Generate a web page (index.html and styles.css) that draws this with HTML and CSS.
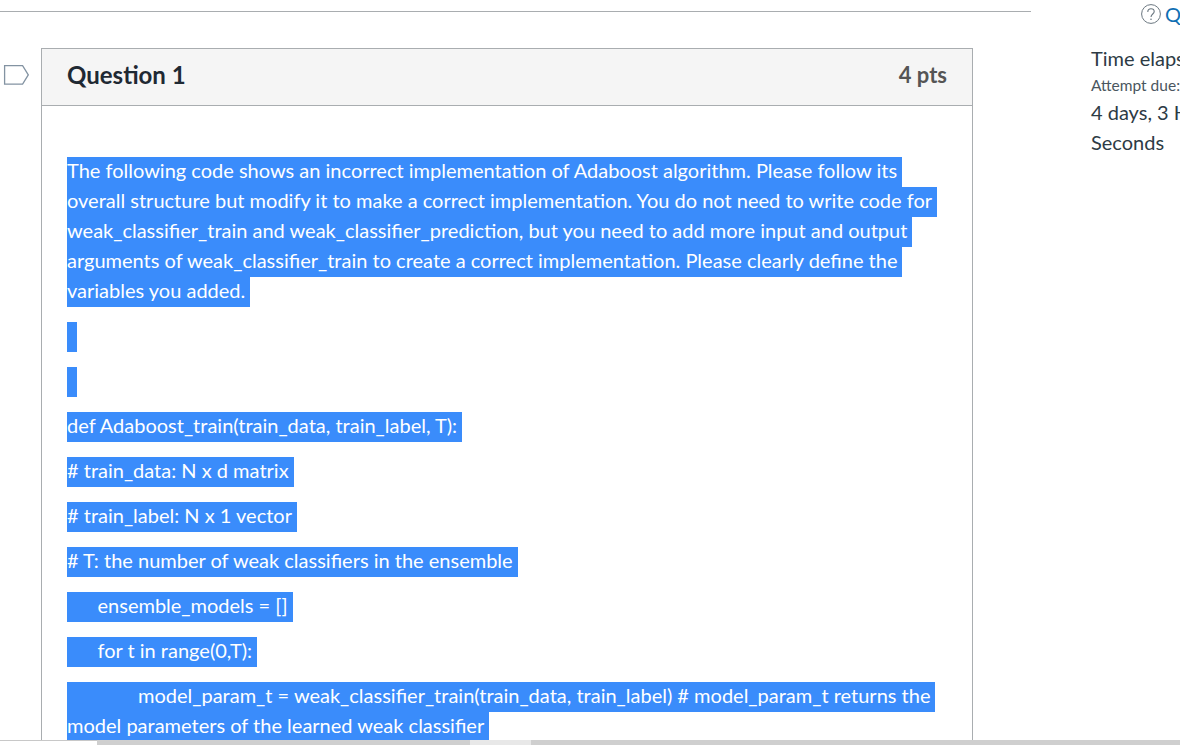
FILE: index.html
```html
<!DOCTYPE html>
<html lang="en">
<head>
<meta charset="utf-8">
<title>Question 1</title>
<link rel="stylesheet" href="styles.css">
</head>
<body>
<div class="viewport">
  <main class="main">
    <hr class="rule">
    <div class="question-row">
      <div class="flag-col">
        <svg class="flag" width="26" height="21" viewBox="0 0 26 21" aria-hidden="true"><path d="M1.6 1.6H19.6L25.3 10.9L19.6 20.2H1.6Z" fill="none" stroke="#8393a2" stroke-width="1.3"/></svg>
      </div>
      <section class="question">
        <header class="q-head">
          <h2 class="q-title">Question 1</h2>
          <span class="q-pts">4 pts</span>
        </header>
        <div class="q-body">
          <div class="para">
            <span class="sel">The following code shows an incorrect implementation of Adaboost algorithm. Please follow its</span>
            <span class="sel">overall structure but modify it to make a correct implementation. You do not need to write code for</span>
            <span class="sel">weak_classifier_train and weak_classifier_prediction, but you need to add more input and output</span>
            <span class="sel">arguments of weak_classifier_train to create a correct implementation. Please clearly define the</span>
            <span class="sel">variables you added.</span>
          </div>
          <div class="para"><span class="sel empty"></span></div>
          <div class="para"><span class="sel empty"></span></div>
          <div class="para"><span class="sel">def Adaboost_train(train_data, train_label, T):</span></div>
          <div class="para"><span class="sel"># train_data: N x d matrix</span></div>
          <div class="para"><span class="sel"># train_label: N x 1 vector</span></div>
          <div class="para"><span class="sel"># T: the number of weak classifiers in the ensemble</span></div>
          <div class="para"><span class="sel"><span class="ind1"></span>ensemble_models = []</span></div>
          <div class="para"><span class="sel"><span class="ind1"></span>for t in range(0,T):</span></div>
          <div class="para">
            <span class="sel"><span class="ind2"></span>model_param_t = weak_classifier_train(train_data, train_label) # model_param_t returns the</span>
            <span class="sel">model parameters of the learned weak classifier</span>
          </div>
        </div>
      </section>
    </div>
  </main>
  <aside class="side">
    <div class="help">
      <svg class="help-icon" width="20" height="20" viewBox="0 0 20 20" aria-hidden="true"><circle cx="10" cy="10" r="9.4" fill="none" stroke="#6b7780" stroke-width="1"/><path d="M6.8 8C6.8 6 8.2 4.8 10 4.8C11.9 4.8 13.2 6 13.2 7.6C13.2 10 10 10 10 13" fill="none" stroke="#6b7780" stroke-width="1.1"/><circle cx="10" cy="15.3" r=".8" fill="#6b7780"/></svg>
      <span class="help-link">Questions</span>
    </div>
    <p class="elapsed">Time elapsed:</p>
    <p class="due">Attempt due:</p>
    <p class="remain">4 days, 3 Hours, 12 Minutes, 9<br>Seconds</p>
  </aside>
</div>
<div class="hscroll"><div class="hscroll-gap"></div><div class="hscroll-a"></div><div class="hscroll-b"></div><div class="hscroll-c"></div></div>
</body>
</html>
```
FILE: styles.css
```css
* { box-sizing: border-box; }
html, body { margin: 0; padding: 0; height: 745px; overflow: hidden; background: #fff; }
body { font-family: Lato, "Liberation Sans", sans-serif; color: #2d3b45; display: flex; flex-direction: column; }
.viewport { height: 740px; overflow: hidden; display: flex; flex: none; }
.main { width: 1031px; flex: none; padding-top: 11px; }
.rule { margin: 0; border: 0; border-top: 1px solid #a9adb0; height: 1px; }
.question-row { display: flex; margin-top: 36px; }
.flag-col { width: 41px; flex: none; padding: 16px 0 0 3px; }
.flag { display: block; }
.question { width: 932px; flex: none; border: 1px solid #a9adb0; border-bottom: 0; }
.q-head { height: 57px; background: #f5f5f5; border-bottom: 1px solid #a9adb0; padding: 0 25px 6px; display: flex; justify-content: space-between; align-items: center; }
.q-title { margin: 0; font-size: 24px; font-weight: 700; color: #1f2933; }
.q-pts { font-size: 22px; font-weight: 700; color: #555; }
.q-body { padding: 51px 25px 0; font-size: 20px; color: #fff; }
.para { margin-bottom: 15px; }
.sel { display: block; width: fit-content; height: 30px; line-height: 26px; padding-right: 5px; background: #3a8cfb; white-space: pre; }
.empty { width: 10px; padding: 0; }
.ind1 { display: inline-block; width: 30.5px; }
.ind2 { display: inline-block; width: 71px; }
.side { flex: 1; min-width: 0; overflow: hidden; padding-left: 60px; white-space: nowrap; font-size: 20px; color: #2d3b45; }
.help { display: flex; align-items: center; gap: 4px; margin: 4px 0 0 50px; height: 20px; }
.help-icon { flex: none; }
.help-link { flex: none; color: #0f6fb3; font-size: 20px; }
.elapsed { margin: 22px 0 0; line-height: 24px; }
.due { margin: 5px 0 0; font-size: 15.5px; line-height: 20px; color: #4a5660; }
.remain { margin: 2px 0 0; line-height: 30px; }
.hscroll { height: 5px; flex: none; display: flex; background: #fff; }
.hscroll-gap { width: 97px; border-top: 1px solid #c8c8c8; }
.hscroll-a { width: 373px; background: #cfcfcf; }
.hscroll-b { width: 61px; background: #e8e8e8; }
.hscroll-c { flex: 1; background: #cfcfcf; }
```
